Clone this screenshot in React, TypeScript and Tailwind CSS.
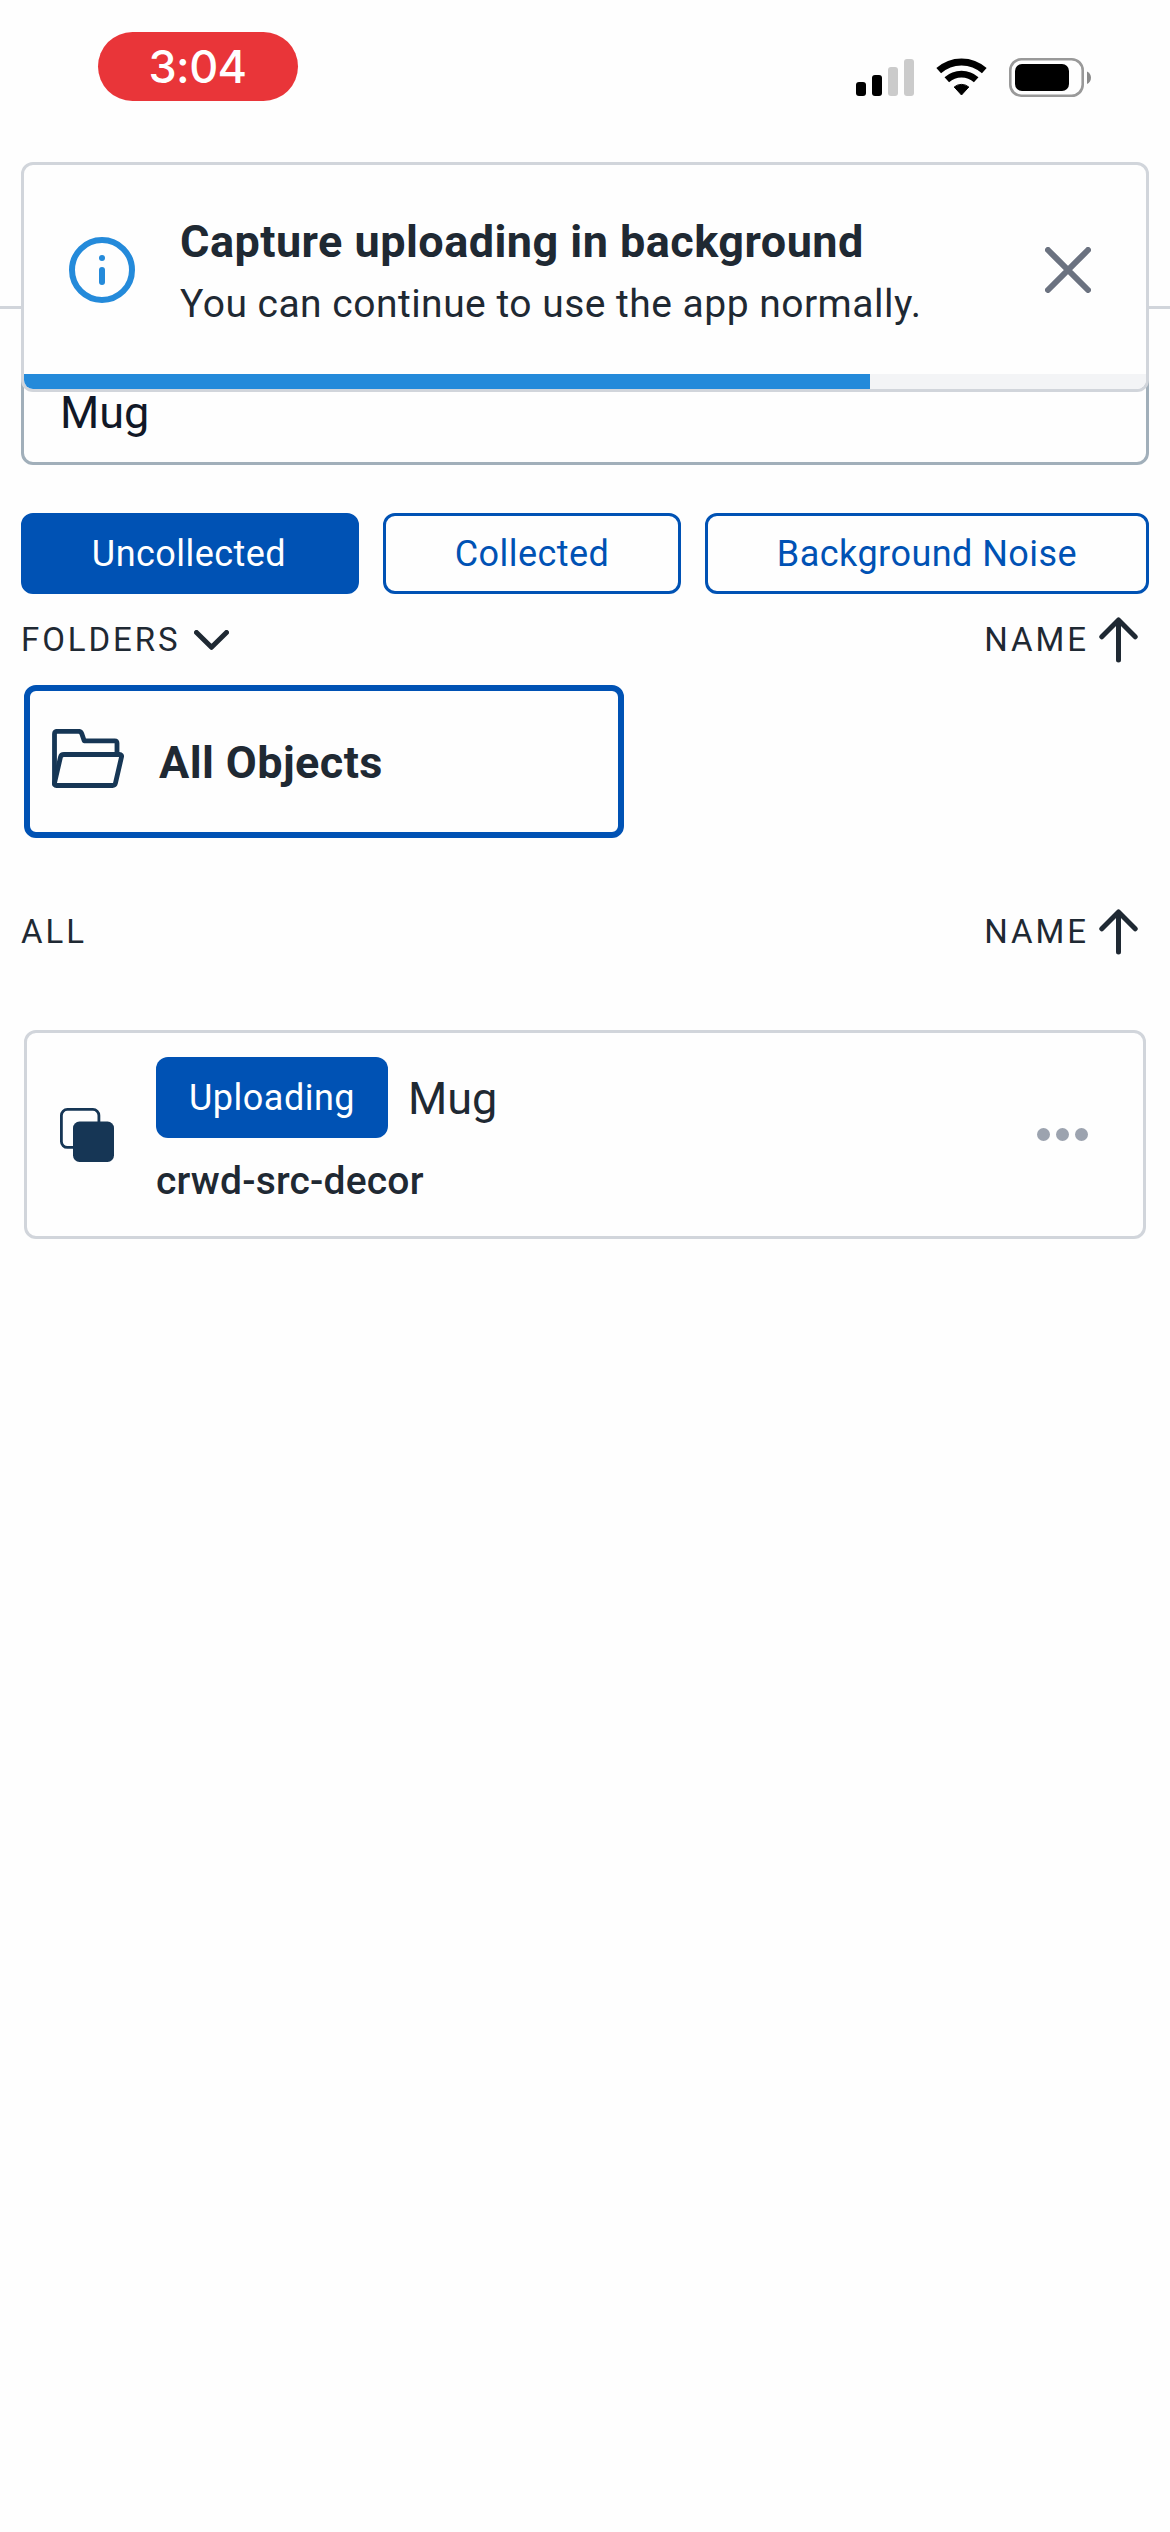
import React from "react";
import clsx from "clsx";

const filters = [
  { label: "Uncollected", active: true, width: "w-[338px]" },
  { label: "Collected", active: false, width: "w-[298px]" },
  { label: "Background Noise", active: false, width: "w-[444px]" },
];

const StatusBar = () => (
  <div className="flex items-start justify-between pl-[98px] pr-[79px] pt-8">
    <div className="flex h-[69px] w-[200px] items-center justify-center rounded-full bg-[#e93539] pr-px font-['Inter',sans-serif] text-[45px] font-medium tracking-[-0.6px] text-white">
      3:04
    </div>
    <div className="flex pt-[26px]">
      <svg width="58" height="39" viewBox="0 0 58 39">
        <rect x="0" y="24" width="10" height="14" rx="3" fill="#000" />
        <rect x="16" y="17" width="10" height="21" rx="3" fill="#000" />
        <rect x="32" y="9" width="10" height="29" rx="3" fill="#cbcbcb" />
        <rect x="48" y="1" width="10" height="37" rx="3" fill="#cbcbcb" />
      </svg>
      <svg className="ml-[22px]" width="51" height="39" viewBox="0 0 51 39" fill="none" stroke="#000">
        <path d="M2.7 12.7a34 34 0 0 1 45.6 0" strokeWidth="7" />
        <path d="M10.8 21.700a22 22 0 0 1 29.400 0" strokeWidth="6.800" />
        <path d="M18.200 29a11.500 11.500 0 0 1 14.600 0L25.500 37z" fill="#000" strokeWidth="1" strokeLinejoin="round" />
      </svg>
      <svg className="ml-[22px]" width="82" height="39" viewBox="0 0 82 39">
        <rect x="1.300" y="1.300" width="72.400" height="36.400" rx="11" fill="none" stroke="#999" strokeWidth="2.600" />
        <rect x="6" y="6" width="54" height="27" rx="7" fill="#000" />
        <path d="M78 13.500v12.500c2.500-1 4-3.500 4-6.200s-1.500-5.300-4-6.300z" fill="#8a8a8a" />
      </svg>
    </div>
  </div>
);

const Toast = ({ progress }: { progress: number }) => (
  <div className="absolute left-[21px] top-[162px] flex h-[230px] w-[1128px] flex-col overflow-hidden rounded-xl border-3 border-[#d1d5db] bg-[#fefefe]">
    <div className="flex flex-1 items-center pl-[45px] pr-[55px]">
      <svg width="66" height="66" viewBox="0 0 66 66" fill="none" stroke="#248ada" strokeWidth="6" strokeLinecap="round">
        <circle cx="33" cy="33" r="30" />
        <path d="M33 33v12" />
        <circle cx="33" cy="21" r="3" fill="#248ada" stroke="none" />
      </svg>
      <div className="ml-[45px] flex-1">
        <h2 className="text-[45px] leading-[68px] font-bold tracking-[0.46px]">
          Capture uploading in background
        </h2>
        <p className="text-[39px] leading-[56px] tracking-[0.48px]">
          You can continue to use the app normally.
        </p>
      </div>
      <button aria-label="Close">
        <svg width="46" height="46" viewBox="0 0 46 46" fill="none" stroke="#6b7280" strokeWidth="6" strokeLinecap="round">
          <path d="M3 3l40 40M43 3L3 43" />
        </svg>
      </button>
    </div>
    <div className="h-[15px] bg-[#f3f4f6]">
      <div className="h-full bg-[#248ada]" style={{ width: `${progress}%` }} />
    </div>
  </div>
);

const SortButton = () => (
  <button className="flex items-center pr-[11px]">
    <span>NAME</span>
    <svg className="ml-[10px]" width="39" height="46" viewBox="0 0 39 46" fill="none" stroke="#1f2933" strokeWidth="5" strokeLinecap="round" strokeLinejoin="round">
      <path d="M19.500 43V3M2.800 19.800L19.500 3l16.700 16.800" />
    </svg>
  </button>
);

const FolderIcon = () => (
  <svg width="72" height="60" viewBox="0 0 72 60" fill="none" stroke="#163655" strokeWidth="4.800" strokeLinejoin="round" strokeLinecap="round">
    <path d="M2.500 54V5q0-2.700 2.700-2.700h21.300q2.500 0 3.300 2.400l2.400 7.100h30.500q2.300 0 2.300 2.300v10.500" />
    <path d="M12 25.500h55.500q2.600 0 2 2.500L63.500 54q-.6 2.500-3 2.500h-56q-2.600 0-2-2.500L8.500 28q.6-2.500 3.500-2.500z" />
  </svg>
);

export default function App() {
  return (
    <div className="relative min-h-[2532px] w-[1170px] bg-[#fefefe] font-['Roboto',sans-serif] text-[#1f2933]">
      <header className="h-[309px] border-b-3 border-[#d1d5db]">
        <StatusBar />
      </header>

      <main className="px-[21px] pt-[51px]">
        <div className="flex h-[105px] items-center rounded-xl border-3 border-[#a1afba] px-9 text-[45px] text-[#111827]">
          Mug
        </div>

        <div className="mt-12 flex gap-6">
          {filters.map((filter) => (
            <button
              key={filter.label}
              className={clsx(
                "h-[81px] rounded-xl border-3 border-[#0052b4] text-[36px] tracking-[0.46px]",
                filter.width,
                filter.active ? "bg-[#0052b4] pr-[2px] text-white" : "text-[#0052b4]"
              )}
            >
              {filter.label}
            </button>
          ))}
        </div>

        <div className="flex h-[91px] items-center justify-between text-[33px] tracking-[2.93px]">
          <button className="flex items-center">
            <span>FOLDERS</span>
            <svg className="ml-[13px]" width="35" height="20" viewBox="0 0 35 20" fill="none" stroke="#1f2933" strokeWidth="5" strokeLinecap="round" strokeLinejoin="round">
              <path d="M2.500 2.500l15 14.800 15-14.800" />
            </svg>
          </button>
          <SortButton />
        </div>

        <div className="mx-[3px] flex h-[153px] w-[600px] items-center rounded-xl border-6 border-[#0052b4] pl-[22px]">
          <div className="pb-[6px]">
            <FolderIcon />
          </div>
          <span className="ml-[35px] pt-[2px] text-[45px] font-bold tracking-[0.4px]">All Objects</span>
        </div>

        <div className="mt-12 flex h-[91px] items-center justify-between text-[33px] tracking-[2.93px]">
          <span>ALL</span>
          <SortButton />
        </div>

        <div className="mx-[3px] mt-[53px] flex h-[209px] items-center rounded-xl border-3 border-[#d1d5db] pl-[33px] pr-[55px]">
          <svg width="54" height="54" viewBox="0 0 54 54">
            <rect x="1.400" y="1.400" width="37.500" height="38" rx="6" fill="none" stroke="#163655" strokeWidth="2.800" />
            <rect x="13" y="13.500" width="41" height="40.500" rx="6.500" fill="#163655" />
          </svg>
          <div className="ml-[42px] mt-6 flex-1 self-start">
            <div className="flex items-center">
              <span className="flex h-[81px] w-[232px] items-center justify-center rounded-xl bg-[#0052b4] text-[36px] tracking-[0.5px] text-white">
                Uploading
              </span>
              <span className="ml-5 pt-[2px] text-[45px]">Mug</span>
            </div>
            <p className="mt-[15px] text-[39px] leading-[56px] font-medium tracking-[0.2px]">
              crwd-src-decor
            </p>
          </div>
          <div className="flex gap-[6px]">
            <span className="size-[13px] rounded-full bg-[#9ca3af]" />
            <span className="size-[13px] rounded-full bg-[#9ca3af]" />
            <span className="size-[13px] rounded-full bg-[#9ca3af]" />
          </div>
        </div>
      </main>

      <Toast progress={75.4} />
    </div>
  );
}
